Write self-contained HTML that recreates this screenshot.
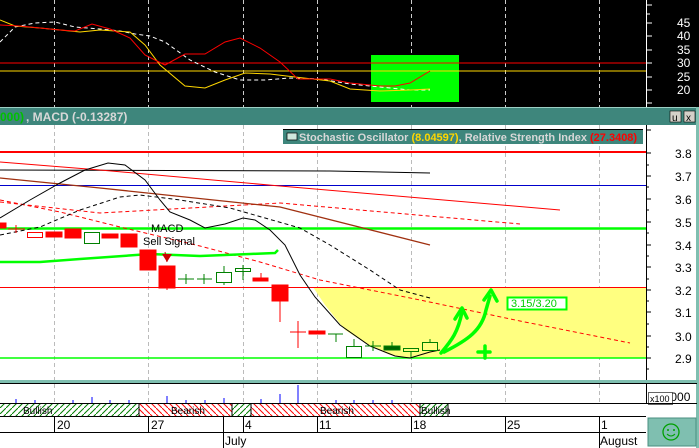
<!DOCTYPE html>
<html><head><meta charset="utf-8"><style>
html,body{margin:0;padding:0;background:#fff;}
svg{display:block;font-family:"Liberation Sans",sans-serif;}
</style></head><body>
<svg width="699" height="448" viewBox="0 0 699 448" xmlns="http://www.w3.org/2000/svg">
<defs>
<pattern id="hg" width="6" height="6" patternUnits="userSpaceOnUse"><path d="M-1,7 L7,-1" stroke="#008000" stroke-width="1"/></pattern>
<pattern id="hr" width="6" height="6" patternUnits="userSpaceOnUse"><path d="M-1,-1 L7,7" stroke="#f00" stroke-width="1"/></pattern>
</defs>
<!-- top panel -->
<rect x="0" y="0" width="699" height="107" fill="#000"/>
<g stroke="#ccc" stroke-dasharray="4,3" stroke-width="1">
<line x1="54.5" y1="0" x2="54.5" y2="107"/><line x1="148.5" y1="0" x2="148.5" y2="107"/><line x1="243.5" y1="0" x2="243.5" y2="107"/><line x1="317.5" y1="0" x2="317.5" y2="107"/><line x1="411.5" y1="0" x2="411.5" y2="107"/><line x1="505.5" y1="0" x2="505.5" y2="107"/><line x1="599.5" y1="0" x2="599.5" y2="107"/>
</g>
<rect x="371" y="55" width="88" height="47" fill="#00ff00"/>
<line x1="0" y1="63" x2="646" y2="63" stroke="#f00"/>
<line x1="0" y1="71" x2="646" y2="71" stroke="#ffd700"/>
<polyline fill="none" stroke="#fff" stroke-dasharray="4,3" points="0,42 15,27 35,23 55,22 75,27 100,29 120,31 135,34 150,36 165,42 190,60 215,72 240,80 265,80 290,78 320,79 350,84 380,87 410,90 430,90"/>
<polyline fill="none" stroke="#ffd700" points="0,20 15,26 40,28 60,30 80,32 100,30 130,32 145,45 160,65 185,86 205,88 225,80 245,73 270,74 295,77 330,81 350,89 380,91 410,90 430,89"/>
<polyline fill="none" stroke="#f00" points="0,25 20,26 40,28 60,30 75,31 92,24 110,29 130,38 145,55 165,65 185,54 205,54 225,42 240,38 260,48 280,62 298,79 330,79 350,83 380,86 395,86 410,83 430,71"/>
<line x1="646.5" y1="0" x2="646.5" y2="107" stroke="#fff"/>
<g stroke="#fff"><line x1="646" y1="5" x2="652" y2="5"/><line x1="646" y1="14" x2="650" y2="14"/><line x1="646" y1="23" x2="652" y2="23"/><line x1="646" y1="36" x2="652" y2="36"/><line x1="646" y1="50" x2="652" y2="50"/><line x1="646" y1="63" x2="652" y2="63"/><line x1="646" y1="77" x2="652" y2="77"/><line x1="646" y1="90" x2="652" y2="90"/><line x1="646" y1="103" x2="652" y2="103"/></g>
<g fill="#fff" font-size="12"><text x="677" y="27">45</text><text x="677" y="40">40</text><text x="677" y="54">35</text><text x="677" y="67">30</text><text x="677" y="81">25</text><text x="677" y="94">20</text></g>
<!-- title bar -->
<rect x="0" y="107" width="699" height="18" fill="#3e867c"/>
<line x1="0" y1="107.5" x2="699" y2="107.5" stroke="#9ccfc4"/>
<text x="0" y="121" font-size="12" font-weight="bold" fill="#00c000">000)</text>
<text x="26" y="121" font-size="12" font-weight="bold" fill="#d8d8d8">, MACD (-0.13287)</text>
<rect x="670" y="111" width="11" height="11" fill="#d4d0c8" stroke="#000" stroke-width="0.6"/><text x="672" y="121" font-size="10">u</text>
<rect x="684" y="111" width="11" height="11" fill="#d4d0c8" stroke="#000" stroke-width="0.6"/><text x="686" y="121" font-size="10">x</text>
<!-- main panel -->
<rect x="0" y="125" width="697" height="255" fill="#fff"/>
<rect x="696" y="107" width="3" height="341" fill="#7fbfb0"/>
<g stroke="#bbb" stroke-dasharray="4,3">
<line x1="54.5" y1="125" x2="54.5" y2="380"/><line x1="148.5" y1="125" x2="148.5" y2="380"/><line x1="243.5" y1="125" x2="243.5" y2="380"/><line x1="317.5" y1="125" x2="317.5" y2="380"/><line x1="411.5" y1="125" x2="411.5" y2="380"/><line x1="505.5" y1="125" x2="505.5" y2="380"/><line x1="599.5" y1="125" x2="599.5" y2="380"/>
</g>
<polygon fill="#ffff80" points="313,287 646,287 646,358 410,358 390,355 370,346 345,330 325,305"/>
<line x1="0" y1="152" x2="646" y2="152" stroke="#f00" stroke-width="2"/>
<polyline fill="none" stroke="#000" points="0,170 330,171 430,173"/>
<line x1="0" y1="185.5" x2="646" y2="185.5" stroke="#00c"/>
<line x1="0" y1="228.5" x2="646" y2="228.5" stroke="#00ff00" stroke-width="2.5"/>
<line x1="0" y1="287.5" x2="646" y2="287.5" stroke="#f00"/>
<line x1="0" y1="358" x2="646" y2="358" stroke="#00ff00" stroke-width="1.5"/>
<polyline fill="none" stroke="#f00" points="0,162 100,170 280,186 560,210"/>
<polyline fill="none" stroke="#f00" stroke-dasharray="4,3" points="0,202 100,213 280,203 520,224"/>
<polyline fill="none" stroke="#a03010" stroke-width="1.3" points="0,178 100,188 280,207 430,245"/>
<polyline fill="none" stroke="#f00" stroke-dasharray="4,3" points="0,200 60,212 120,227 200,246 260,262 320,280 420,300 520,321 630,343"/>
<polyline fill="none" stroke="#000" stroke-dasharray="4,3" points="0,235 40,227 80,210 120,197 140,195 180,200 230,208 300,228 330,245 370,270 400,290 430,298"/>
<polyline fill="none" stroke="#000" points="0,218 30,200 60,183 85,170 108,163 125,165 145,180 160,200 170,212 190,220 205,228 225,224 243,218 255,220 270,230 285,245 300,275 315,297 340,325 370,346 395,356 410,358 430,352 440,350"/>
<polyline fill="none" stroke="#00ff00" stroke-width="2.5" points="0,262 40,262 80,259 150,254 200,256 250,254 275,253 278,250"/>
<!-- candles -->
<g stroke="#f00" fill="#f00">
<rect x="0" y="223" width="6" height="5"/><line x1="8" y1="229" x2="25" y2="229"/><line x1="16" y1="225" x2="16" y2="233"/>
<rect x="27.5" y="232.5" width="15" height="5" fill="none"/>
<rect x="46" y="232" width="16" height="5"/><rect x="65" y="229" width="16" height="9"/>
<rect x="102" y="234" width="16" height="4"/><rect x="121" y="234" width="16" height="13"/>
<rect x="140" y="250" width="16" height="20"/><rect x="159" y="266" width="16" height="22"/><line x1="167" y1="288" x2="167" y2="290"/>
<line x1="261" y1="273" x2="261" y2="278"/><rect x="253" y="278" width="15" height="3"/>
<rect x="272" y="285" width="16" height="16"/><line x1="280" y1="301" x2="280" y2="322"/>
<line x1="290" y1="332" x2="306" y2="332"/><line x1="298" y1="321" x2="298" y2="348"/>
<rect x="309" y="331" width="16" height="3"/>
</g>
<line x1="165" y1="252" x2="167" y2="262" stroke="#c00"/><polygon points="162,254 172,254 167,262" fill="#c00"/>
<g stroke="#008000" fill="none">
<rect x="84.5" y="232.5" width="15" height="11"/>
<line x1="178" y1="279" x2="194" y2="279"/><line x1="186" y1="274" x2="186" y2="284"/>
<line x1="197" y1="279" x2="212" y2="279"/><line x1="204" y1="274" x2="204" y2="284"/>
<rect x="216.5" y="272.5" width="15" height="10"/><line x1="224" y1="266" x2="224" y2="272"/><line x1="224" y1="283" x2="224" y2="285"/>
<rect x="235.5" y="268.5" width="15" height="3"/><line x1="243" y1="265" x2="243" y2="280"/>
<line x1="328" y1="334" x2="343" y2="334"/><line x1="336" y1="334" x2="336" y2="342"/>
<rect x="346.5" y="346.5" width="15" height="11"/><line x1="354" y1="339" x2="354" y2="346"/>
<line x1="365" y1="346" x2="381" y2="346"/><line x1="373" y1="341" x2="373" y2="351"/>
<rect x="384" y="346" width="16" height="4" fill="#006400"/><line x1="392" y1="342" x2="392" y2="346"/>
<rect x="403.5" y="348.5" width="15" height="3"/><line x1="411" y1="352" x2="411" y2="357"/>
<rect x="422.5" y="342.5" width="15" height="8"/><line x1="430" y1="339" x2="430" y2="342"/>
</g>
<text x="151" y="232" font-size="11">MACD</text>
<text x="143" y="245" font-size="11">Sell Signal</text>
<!-- green arrows -->
<g stroke="#00ff00" stroke-width="3.5" fill="none" stroke-linecap="round" stroke-linejoin="round">
<path d="M441,353 C452,340 458,332 462,312"/><path d="M455,319 L462,308 L467,318"/>
<path d="M444,352 C468,340 482,330 486,310 L490,296"/><path d="M484,300 L491,290 L497,301"/>
<path d="M478,352 L490,352 M485,346 L485,358"/>
</g>
<rect x="507.5" y="297.5" width="59" height="12" fill="#fff" stroke="#00ff00" stroke-width="2"/>
<text x="511" y="307" font-size="11" fill="#00cc00">3.15/3.20</text>
<!-- legend -->
<rect x="283" y="129" width="360" height="15" fill="#3e867c"/>
<line x1="283" y1="129.5" x2="643" y2="129.5" stroke="#000"/>
<rect x="287" y="133" width="10" height="7" fill="#cfe8dc" stroke="#000" stroke-width="0.7"/>
<text x="299" y="141" font-size="11" font-weight="bold" fill="#d8d8d8">Stochastic Oscillator <tspan fill="#ffd700">(8.04597)</tspan>, Relative Strength Index <tspan fill="#f00">(27.3408)</tspan></text>
<!-- axis -->
<line x1="646.5" y1="125" x2="646.5" y2="380" stroke="#000"/>
<g stroke="#000">
<line x1="646" y1="130" x2="651" y2="130"/><line x1="646" y1="153" x2="651" y2="153"/><line x1="646" y1="165" x2="649" y2="165"/><line x1="646" y1="176" x2="651" y2="176"/><line x1="646" y1="187" x2="649" y2="187"/><line x1="646" y1="199" x2="651" y2="199"/><line x1="646" y1="210" x2="649" y2="210"/><line x1="646" y1="222" x2="651" y2="222"/><line x1="646" y1="233" x2="649" y2="233"/><line x1="646" y1="245" x2="651" y2="245"/><line x1="646" y1="256" x2="649" y2="256"/><line x1="646" y1="267" x2="651" y2="267"/><line x1="646" y1="279" x2="649" y2="279"/><line x1="646" y1="290" x2="651" y2="290"/><line x1="646" y1="301" x2="649" y2="301"/><line x1="646" y1="312" x2="651" y2="312"/><line x1="646" y1="324" x2="649" y2="324"/><line x1="646" y1="336" x2="651" y2="336"/><line x1="646" y1="347" x2="649" y2="347"/><line x1="646" y1="358" x2="651" y2="358"/><line x1="646" y1="369" x2="649" y2="369"/>
</g>
<g font-size="12" fill="#000"><text x="675" y="158">3.8</text><text x="675" y="181">3.7</text><text x="675" y="204">3.6</text><text x="675" y="227">3.5</text><text x="675" y="250">3.4</text><text x="675" y="272">3.3</text><text x="675" y="295">3.2</text><text x="675" y="317">3.1</text><text x="675" y="341">3.0</text><text x="675" y="363">2.9</text></g>
<!-- volume panel -->
<rect x="0" y="380" width="697" height="3" fill="#7fbfb0"/>
<line x1="0" y1="383.5" x2="697" y2="383.5" stroke="#000"/>
<line x1="646.5" y1="383" x2="646.5" y2="403" stroke="#000"/>
<g stroke="#bbb" stroke-dasharray="4,3"><line x1="54.5" y1="384" x2="54.5" y2="403"/><line x1="148.5" y1="384" x2="148.5" y2="403"/><line x1="243.5" y1="384" x2="243.5" y2="403"/><line x1="317.5" y1="384" x2="317.5" y2="403"/><line x1="411.5" y1="384" x2="411.5" y2="403"/><line x1="505.5" y1="384" x2="505.5" y2="403"/><line x1="599.5" y1="384" x2="599.5" y2="403"/></g>
<g stroke="#00f"><line x1="16" y1="399" x2="16" y2="403"/><line x1="35" y1="400" x2="35" y2="403"/><line x1="73" y1="400" x2="73" y2="403"/><line x1="92" y1="397" x2="92" y2="403"/><line x1="110" y1="400" x2="110" y2="403"/><line x1="129" y1="400" x2="129" y2="403"/><line x1="167" y1="396" x2="167" y2="403"/><line x1="186" y1="400" x2="186" y2="403"/><line x1="205" y1="400" x2="205" y2="403"/><line x1="224" y1="398" x2="224" y2="403"/><line x1="261" y1="399" x2="261" y2="403"/><line x1="280" y1="394" x2="280" y2="403"/><line x1="298" y1="385" x2="298" y2="403"/><line x1="336" y1="400" x2="336" y2="403"/><line x1="354" y1="400" x2="354" y2="403"/><line x1="373" y1="400" x2="373" y2="403"/><line x1="392" y1="400" x2="392" y2="403"/></g>
<text x="650" y="401" font-size="12">~10000</text>
<rect x="648.5" y="392.5" width="24" height="12" fill="#fff" stroke="#000" stroke-width="0.6"/><text x="650" y="402" font-size="9">x100</text>
<line x1="0" y1="403.5" x2="697" y2="403.5" stroke="#000"/>
<!-- bull/bear band -->
<rect x="0" y="404" width="139" height="12" fill="url(#hg)"/>
<rect x="139" y="404" width="93" height="12" fill="url(#hr)"/>
<rect x="232" y="404" width="19" height="12" fill="url(#hg)"/>
<rect x="251" y="404" width="169" height="12" fill="url(#hr)"/>
<rect x="420" y="404" width="28" height="12" fill="url(#hg)"/>
<g stroke="#000" fill="none"><line x1="139" y1="404" x2="139" y2="416"/><line x1="232" y1="404" x2="232" y2="416"/><line x1="251" y1="404" x2="251" y2="416"/><line x1="420" y1="404" x2="420" y2="416"/><line x1="448" y1="404" x2="448" y2="416"/></g>
<g font-size="10" fill="#000"><text x="23" y="414">Bullish</text><text x="171" y="414">Bearish</text><text x="320" y="414">Bearish</text><text x="421" y="414">Bullish</text></g>
<line x1="0" y1="416.5" x2="646" y2="416.5" stroke="#000"/>
<!-- date axis -->
<g stroke="#000"><line x1="54.5" y1="416" x2="54.5" y2="432"/><line x1="148.5" y1="416" x2="148.5" y2="432"/><line x1="243.5" y1="416" x2="243.5" y2="432"/><line x1="317.5" y1="416" x2="317.5" y2="432"/><line x1="411.5" y1="416" x2="411.5" y2="432"/><line x1="505.5" y1="416" x2="505.5" y2="432"/><line x1="599.5" y1="416" x2="599.5" y2="448"/><line x1="223.5" y1="416" x2="223.5" y2="448"/><line x1="0" y1="432.5" x2="646" y2="432.5"/></g>
<g font-size="12"><text x="57" y="429">20</text><text x="151" y="429">27</text><text x="245" y="429">4</text><text x="319" y="429">11</text><text x="413" y="429">18</text><text x="507" y="429">25</text><text x="601" y="429">1</text><text x="225" y="445">July</text><text x="600" y="445">August</text></g>
<rect x="646" y="416" width="50" height="32" fill="#fff"/>
<rect x="648" y="418" width="48" height="28" fill="#7fbfb0" stroke="#4a8f80"/>
<circle cx="671" cy="432" r="8" fill="none" stroke="#00a000" stroke-width="1.3"/>
<circle cx="668" cy="430" r="1" fill="#00a000"/><circle cx="674" cy="430" r="1" fill="#00a000"/>
<path d="M667,434 Q671,438 675,434" fill="none" stroke="#00a000"/>
</svg>
</body></html>
